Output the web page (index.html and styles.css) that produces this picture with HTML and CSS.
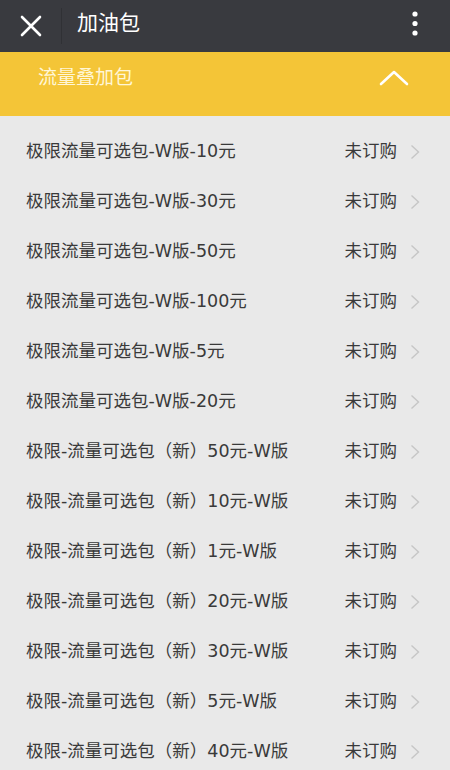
FILE: index.html
```html
<!DOCTYPE html>
<html lang="zh-CN">
  <head>
    <meta charset="UTF-8" />
    <meta name="viewport" content="width=device-width, initial-scale=1.0" />
    <title>加油包</title>
    <link rel="stylesheet" href="styles.css">
  </head>
  <body>
    <header class="top-bar">
      <svg class="close-icon" width="22" height="22" viewBox="0 0 22 22">
        <path d="M2 2 L20 20 M20 2 L2 20" stroke="#fff" stroke-width="2.6" stroke-linecap="round" fill="none" />
      </svg>
      <span class="divider"></span>
      <h1 class="title">加油包</h1>
      <svg class="more-icon" width="6" height="26" viewBox="0 0 6 26">
        <circle cx="3" cy="3" r="2.6" fill="#fff" />
        <circle cx="3" cy="12.5" r="2.6" fill="#fff" />
        <circle cx="3" cy="22" r="2.6" fill="#fff" />
      </svg>
    </header>
    <section class="group-head">
      <span class="group-title">流量叠加包</span>
      <svg class="up-icon" width="30" height="16" viewBox="0 0 30 16">
        <polyline points="2,14 15,2 28,14" stroke="#fff" stroke-width="2.6" stroke-linecap="round" stroke-linejoin="round" fill="none" />
      </svg>
    </section>
    <ul class="pack-list">
      <li class="pack-item"><span class="pack-name">极限流量可选包-W版-10元</span><span class="pack-state">未订购</span><svg class="arrow" width="10" height="16" viewBox="0 0 10 16"><polyline points="1.5,1.5 8.5,8 1.5,14.5" /></svg></li>
      <li class="pack-item"><span class="pack-name">极限流量可选包-W版-30元</span><span class="pack-state">未订购</span><svg class="arrow" width="10" height="16" viewBox="0 0 10 16"><polyline points="1.5,1.5 8.5,8 1.5,14.5" /></svg></li>
      <li class="pack-item"><span class="pack-name">极限流量可选包-W版-50元</span><span class="pack-state">未订购</span><svg class="arrow" width="10" height="16" viewBox="0 0 10 16"><polyline points="1.5,1.5 8.5,8 1.5,14.5" /></svg></li>
      <li class="pack-item"><span class="pack-name">极限流量可选包-W版-100元</span><span class="pack-state">未订购</span><svg class="arrow" width="10" height="16" viewBox="0 0 10 16"><polyline points="1.5,1.5 8.5,8 1.5,14.5" /></svg></li>
      <li class="pack-item"><span class="pack-name">极限流量可选包-W版-5元</span><span class="pack-state">未订购</span><svg class="arrow" width="10" height="16" viewBox="0 0 10 16"><polyline points="1.5,1.5 8.5,8 1.5,14.5" /></svg></li>
      <li class="pack-item"><span class="pack-name">极限流量可选包-W版-20元</span><span class="pack-state">未订购</span><svg class="arrow" width="10" height="16" viewBox="0 0 10 16"><polyline points="1.5,1.5 8.5,8 1.5,14.5" /></svg></li>
      <li class="pack-item"><span class="pack-name">极限-流量可选包（新）50元-W版</span><span class="pack-state">未订购</span><svg class="arrow" width="10" height="16" viewBox="0 0 10 16"><polyline points="1.5,1.5 8.5,8 1.5,14.5" /></svg></li>
      <li class="pack-item"><span class="pack-name">极限-流量可选包（新）10元-W版</span><span class="pack-state">未订购</span><svg class="arrow" width="10" height="16" viewBox="0 0 10 16"><polyline points="1.5,1.5 8.5,8 1.5,14.5" /></svg></li>
      <li class="pack-item"><span class="pack-name">极限-流量可选包（新）1元-W版</span><span class="pack-state">未订购</span><svg class="arrow" width="10" height="16" viewBox="0 0 10 16"><polyline points="1.5,1.5 8.5,8 1.5,14.5" /></svg></li>
      <li class="pack-item"><span class="pack-name">极限-流量可选包（新）20元-W版</span><span class="pack-state">未订购</span><svg class="arrow" width="10" height="16" viewBox="0 0 10 16"><polyline points="1.5,1.5 8.5,8 1.5,14.5" /></svg></li>
      <li class="pack-item"><span class="pack-name">极限-流量可选包（新）30元-W版</span><span class="pack-state">未订购</span><svg class="arrow" width="10" height="16" viewBox="0 0 10 16"><polyline points="1.5,1.5 8.5,8 1.5,14.5" /></svg></li>
      <li class="pack-item"><span class="pack-name">极限-流量可选包（新）5元-W版</span><span class="pack-state">未订购</span><svg class="arrow" width="10" height="16" viewBox="0 0 10 16"><polyline points="1.5,1.5 8.5,8 1.5,14.5" /></svg></li>
      <li class="pack-item"><span class="pack-name">极限-流量可选包（新）40元-W版</span><span class="pack-state">未订购</span><svg class="arrow" width="10" height="16" viewBox="0 0 10 16"><polyline points="1.5,1.5 8.5,8 1.5,14.5" /></svg></li>
    </ul>
  </body>
</html>
```

FILE: styles.css
```css
* {
  box-sizing: border-box;
  font-family: "DejaVu Sans", "Noto Sans CJK SC", sans-serif;
}
html,
body {
  margin: 0;
  height: 770px;
  overflow: hidden;
}
body {
  background-color: #e9e9e9;
}
.top-bar {
  display: flex;
  align-items: center;
  height: 52px;
  padding: 0 32px 0 20px;
  background-color: #393a3f;
}
.close-icon {
  flex: none;
}
.divider {
  width: 1px;
  height: 36px;
  margin: 0 15px 0 19px;
  background-color: #303135;
}
.title {
  flex: 1;
  margin: 0 0 10px;
  font-size: 21px;
  font-weight: normal;
  color: #fff;
}
.more-icon {
  flex: none;
  margin-bottom: 4px;
}
.group-head {
  display: flex;
  align-items: center;
  justify-content: space-between;
  height: 64px;
  padding: 0 41px 12px 38px;
  background-color: #f4c537;
}
.group-title {
  font-size: 19px;
  color: #fff6d6;
  margin-bottom: 5px;
}
.up-icon {
  flex: none;
}
.pack-list {
  list-style: none;
  margin: 0;
  padding: 11px 0 0;
}
.pack-item {
  display: flex;
  align-items: center;
  height: 50px;
  padding: 0 30px 0 26px;
  font-size: 17.5px;
  color: #3a3a3a;
}
.pack-name {
  flex: 1;
  margin-bottom: 5px;
}
.pack-state {
  margin-bottom: 5px;
}
.arrow {
  flex: none;
  margin-left: 13px;
  fill: none;
  stroke: #c6c6c6;
  stroke-width: 1.4;
}
```
